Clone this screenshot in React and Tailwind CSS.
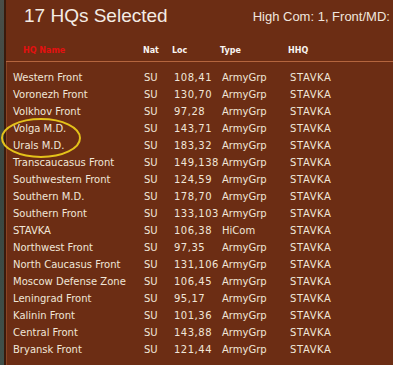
import React from "react";

const rows = [
  ["Western Front", "SU", "108,41", "ArmyGrp", "STAVKA"],
  ["Voronezh Front", "SU", "130,70", "ArmyGrp", "STAVKA"],
  ["Volkhov Front", "SU", "97,28", "ArmyGrp", "STAVKA"],
  ["Volga M.D.", "SU", "143,71", "ArmyGrp", "STAVKA"],
  ["Urals M.D.", "SU", "183,32", "ArmyGrp", "STAVKA"],
  ["Transcaucasus Front", "SU", "149,138", "ArmyGrp", "STAVKA"],
  ["Southwestern Front", "SU", "124,59", "ArmyGrp", "STAVKA"],
  ["Southern M.D.", "SU", "178,70", "ArmyGrp", "STAVKA"],
  ["Southern Front", "SU", "133,103", "ArmyGrp", "STAVKA"],
  ["STAVKA", "SU", "106,38", "HiCom", "STAVKA"],
  ["Northwest Front", "SU", "97,35", "ArmyGrp", "STAVKA"],
  ["North Caucasus Front", "SU", "131,106", "ArmyGrp", "STAVKA"],
  ["Moscow Defense Zone", "SU", "106,45", "ArmyGrp", "STAVKA"],
  ["Leningrad Front", "SU", "95,17", "ArmyGrp", "STAVKA"],
  ["Kalinin Front", "SU", "101,36", "ArmyGrp", "STAVKA"],
  ["Central Front", "SU", "143,88", "ArmyGrp", "STAVKA"],
  ["Bryansk Front", "SU", "121,44", "ArmyGrp", "STAVKA"],
];

export default function App() {
  return (
    <div className="relative flex w-[393px] h-[365px] overflow-hidden bg-[#6c2d14]">
      <div className="w-[4px] bg-gradient-to-b from-[#4a4e48] via-[#3a4640] to-[#40504a]" />
      <div className="w-[2px] bg-[#3a1a0c]" />
      <div className="flex-1 flex flex-col">
        <div className="h-[40px] flex items-start">
          <div className="pl-[18px] pt-[5px] text-[19px] leading-[22px] text-[#f4ece4] font-['Liberation_Sans',Arial,sans-serif] whitespace-nowrap">
            17 HQs Selected
          </div>
          <div className="ml-[85px] pt-[9px] text-[13px] leading-[15px] text-[#f0e6de] font-['Liberation_Sans',Arial,sans-serif] whitespace-nowrap">
            High Com: 1, Front/MD:
          </div>
        </div>
        <div className="h-[21px] pt-[6px] flex items-start text-[8px] leading-[10px] font-bold font-['DejaVu_Sans',Verdana,sans-serif] text-[#f8f4f0] whitespace-nowrap">
          <div className="pl-[17px] w-[137px] text-[#e41010]">HQ Name</div>
          <div className="w-[29px]">Nat</div>
          <div className="w-[48px]">Loc</div>
          <div className="w-[68px]">Type</div>
          <div>HHQ</div>
        </div>
        <div className="h-[1px] bg-[#b4653e]" />
        <div className="flex-1 border-l border-[#8a4424] pt-[7px] font-['DejaVu_Sans',Verdana,sans-serif] text-[10px] leading-[17px] text-[#f0e6d8]">
          {rows.map((r, i) => (
            <div key={i} className="flex h-[17px] whitespace-nowrap">
              <div className="pl-[6px] w-[137px]">{r[0]}</div>
              <div className="w-[30px]">{r[1]}</div>
              <div className="w-[48px] tracking-[0.5px]">{r[2]}</div>
              <div className="w-[68px]">{r[3]}</div>
              <div className="tracking-[0.6px]">{r[4]}</div>
            </div>
          ))}
        </div>
      </div>
      <svg className="absolute left-0 top-[117px]" width="86" height="44" viewBox="0 0 86 44">
        <ellipse cx="41" cy="21" rx="39" ry="19" fill="none" stroke="#e4c21a" strokeWidth="2" />
      </svg>
    </div>
  );
}
